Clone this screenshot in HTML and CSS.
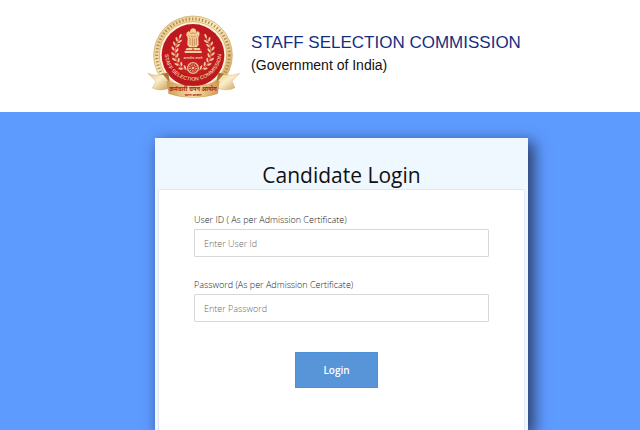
FILE: index.html
```html
<!DOCTYPE html>
<html lang="en">
<head>
<meta charset="utf-8">
<title>Staff Selection Commission - Candidate Login</title>
<link rel="stylesheet" href="styles.css">
</head>
<body>
<header class="masthead">
  <svg class="emblem" viewBox="20 15 282 252" role="img" aria-label="Staff Selection Commission emblem">
    <defs>
      <linearGradient id="gold" x1="0" y1="0" x2="1" y2="1">
        <stop offset="0" stop-color="#e3c07c"/>
        <stop offset=".45" stop-color="#fbeecb"/>
        <stop offset="1" stop-color="#c99a4f"/>
      </linearGradient>
      <linearGradient id="band" x1="0" y1="0" x2="1" y2="0">
        <stop offset="0" stop-color="#cf9c55"/>
        <stop offset=".5" stop-color="#f7dfa9"/>
        <stop offset="1" stop-color="#cf9a50"/>
      </linearGradient>
      <path id="motto-arc" d="M73 120 V130 A85 82 0 0 0 243 130 V120"/>
      <g id="laurel">
        <path d="M143 181 C104 172 92 125 119 83" fill="none" stroke="#e5ab78" stroke-width="2"/>
        <g fill="#f2cb9c">
          <ellipse cx="120" cy="78" rx="3" ry="7" transform="rotate(25 120 78)"/>
          <ellipse cx="109" cy="88" rx="3" ry="7" transform="rotate(-15 109 88)"/>
          <ellipse cx="119" cy="94" rx="3" ry="7" transform="rotate(55 119 94)"/>
          <ellipse cx="102" cy="101" rx="3" ry="7" transform="rotate(-25 102 101)"/>
          <ellipse cx="113" cy="107" rx="3" ry="7" transform="rotate(45 113 107)"/>
          <ellipse cx="98" cy="116" rx="3" ry="7" transform="rotate(-35 98 116)"/>
          <ellipse cx="110" cy="121" rx="3" ry="7" transform="rotate(35 110 121)"/>
          <ellipse cx="98" cy="132" rx="3" ry="7" transform="rotate(-45 98 132)"/>
          <ellipse cx="111" cy="136" rx="3" ry="7" transform="rotate(20 111 136)"/>
          <ellipse cx="101" cy="148" rx="3" ry="7" transform="rotate(-55 101 148)"/>
          <ellipse cx="115" cy="150" rx="3" ry="7" transform="rotate(5 115 150)"/>
          <ellipse cx="109" cy="163" rx="3" ry="7" transform="rotate(-65 109 163)"/>
          <ellipse cx="123" cy="162" rx="3" ry="7" transform="rotate(-10 123 162)"/>
          <ellipse cx="121" cy="176" rx="3" ry="7" transform="rotate(-80 121 176)"/>
          <ellipse cx="134" cy="172" rx="3" ry="7" transform="rotate(-25 134 172)"/>
        </g>
      </g>
    </defs>
    <circle cx="158" cy="136" r="118" fill="url(#gold)" stroke="#c7a15c" stroke-width="2"/>
    <circle cx="158" cy="136" r="109" fill="none" stroke="#b88c44" stroke-width="9" stroke-dasharray="4 6"/>
    <circle cx="158" cy="136" r="101" fill="#fff2d6" stroke="#cfa35e" stroke-width="2"/>
    <circle cx="158" cy="136" r="94" fill="#bb1820"/>
    <circle cx="158" cy="130" r="67" fill="#c61d24"/>
    <use href="#laurel"/>
    <use href="#laurel" transform="matrix(-1 0 0 1 316 0)"/>
    <g fill="#f4d199">
      <path d="M149 65 Q151 55 158 55 Q166 55 168 65 L174 64 Q180 68 177 76 L174 83 L175 105 L169 112 H147 L141 105 L142 83 L138 76 Q137 67 144 64 Z"/>
      <path d="M139 114 H178 L181 121 H135 Z"/>
      <path d="M133 123 H184 V129 H133 Z"/>
    </g>
    <path d="M148 67 L154 72 L158 67 L163 72 L169 67 M151 78 Q158 84 166 78 M149 83 V105 M156 85 V108 M162 85 V108 M168 83 V105 M144 76 L148 80 M173 76 L169 80" fill="none" stroke="#b66a3e" stroke-width="2"/>
    <circle cx="158" cy="118" r="3" fill="#bd6440"/>
    <text class="emblem-truth" x="158" y="146">सत्यमेव जयते</text>
    <circle cx="158" cy="174" r="16" fill="#be2327" stroke="#efbc8d" stroke-width="4"/>
    <circle cx="158" cy="174" r="9" fill="none" stroke="#efbc8d" stroke-width="7" stroke-dasharray="2 3"/>
    <circle cx="158" cy="174" r="4" fill="#efbc8d"/>
    <text class="emblem-name"><textPath href="#motto-arc" startOffset="50%">STAFF SELECTION COMMISSION</textPath></text>
    <path d="M22 190 Q52 202 82 188 L89 233 Q62 246 36 234 L47 214 Z" fill="url(#gold)" stroke="#c59752" stroke-width="1"/>
    <path d="M298 190 Q266 202 235 188 L228 233 Q257 246 284 233 L275 213 Z" fill="url(#gold)" stroke="#c59752" stroke-width="1"/>
    <path d="M66 191 L84 188 L88 217 Z M251 191 L233 188 L229 217 Z" fill="#a87436"/>
    <path d="M80 213 Q158 243 237 213 L232 251 Q158 274 85 251 Z" fill="url(#band)" stroke="#bd843f" stroke-width="1"/>
    <text class="emblem-hindi" x="158" y="243">कर्मचारी चयन आयोग</text>
    <text class="emblem-country" x="158" y="257">भारत सरकार</text>
  </svg>
  <div class="masthead-text">
    <p class="org-name">STAFF SELECTION COMMISSION</p>
    <p class="org-sub">(Government of India)</p>
  </div>
</header>
<main class="stage">
  <section class="card">
    <h1 class="card-title">Candidate Login</h1>
    <form class="login-form">
      <div class="field">
        <label for="user-id">User ID ( As per Admission Certificate)</label>
        <input id="user-id" type="text" placeholder="Enter User Id">
      </div>
      <div class="field">
        <label for="password">Password (As per Admission Certificate)</label>
        <input id="password" type="password" placeholder="Enter Password">
      </div>
      <button class="login-button" type="submit">Login</button>
    </form>
  </section>
</main>
</body>
</html>
```
FILE: styles.css
```css
* {
  box-sizing: border-box;
}

body {
  margin: 0;
  min-height: 100vh;
  display: flex;
  flex-direction: column;
  background: #fff;
  font-family: "Open Sans", "Noto Sans", sans-serif;
}

p,
h1 {
  margin: 0;
}

.masthead {
  display: flex;
  justify-content: center;
  gap: 10px;
  padding: 15px 0 13px 28px;
}

.emblem {
  width: 94px;
  height: 84px;
  flex: none;
}

.emblem text {
  text-anchor: middle;
  font-weight: 700;
}

.emblem-name {
  font-family: "Liberation Sans", sans-serif;
  font-size: 16px;
  fill: #eeb98a;
}

.emblem-truth {
  font-size: 11px;
  fill: #f0bd8b;
}

.emblem-hindi {
  font-size: 17px;
  fill: #a3261c;
}

.emblem-country {
  font-size: 10px;
  fill: #a3261c;
}

.masthead-text {
  padding-top: 16px;
  font-family: "Liberation Sans", Arial, sans-serif;
}

.org-name {
  font-size: 17px;
  line-height: 24px;
  color: #152f80;
}

.org-sub {
  font-size: 14px;
  line-height: 20px;
  color: #111;
}

.stage {
  flex: 1;
  display: flex;
  justify-content: center;
  padding: 26px 0 0 43px;
  background: #5e9bff;
}

.card {
  flex: 0 1 373px;
  padding: 23px 3px 0;
  background: #f0f8ff;
  box-shadow: 5px 5px 14px 1px rgba(35, 45, 75, 0.85);
  display: flex;
  flex-direction: column;
}

.card-title {
  font-size: 21px;
  line-height: 28px;
  font-weight: 400;
  text-align: center;
  color: #111;
}

.login-form {
  flex: 1;
  display: flex;
  flex-direction: column;
  padding: 21px 35px 40px;
  background: #fff;
  border: 1px solid #dfe8f2;
  border-bottom: 0;
  border-radius: 2px 2px 0 0;
}

.field {
  display: flex;
  flex-direction: column;
  margin-bottom: 19px;
}

.field label {
  margin-bottom: 1px;
  font-size: 9px;
  font-weight: 300;
  line-height: 17px;
  color: #222;
}

.field input {
  width: 100%;
  height: 28px;
  padding: 0 9px;
  border: 1px solid #d8d8d8;
  border-radius: 1px;
  font: 300 9px "Open Sans", sans-serif;
  color: #444;
}

.field input::placeholder {
  color: #666;
}

.login-button {
  align-self: center;
  width: 83px;
  height: 36px;
  margin: 11px 10px 0 0;
  border: 1px solid #4b91da;
  background: #5794d8;
  font: 600 10px "Open Sans", sans-serif;
  color: #fff;
}
```
